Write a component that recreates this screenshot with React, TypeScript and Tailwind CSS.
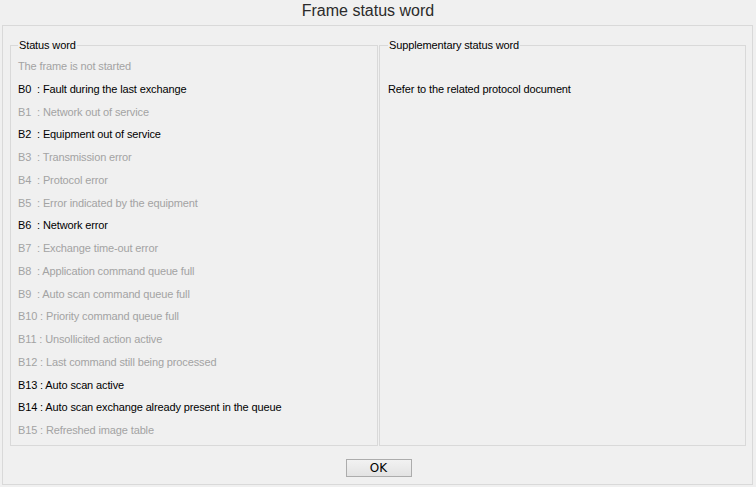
import React from 'react';

interface StatusRow {
  label: string;
  text: string;
  active: boolean;
}

const rows: StatusRow[] = [
  { label: '', text: 'The frame is not started', active: false },
  { label: 'B0  : ', text: 'Fault during the last exchange', active: true },
  { label: 'B1  : ', text: 'Network out of service', active: false },
  { label: 'B2  : ', text: 'Equipment out of service', active: true },
  { label: 'B3  : ', text: 'Transmission error', active: false },
  { label: 'B4  : ', text: 'Protocol error', active: false },
  { label: 'B5  : ', text: 'Error indicated by the equipment', active: false },
  { label: 'B6  : ', text: 'Network error', active: true },
  { label: 'B7  : ', text: 'Exchange time-out error', active: false },
  { label: 'B8  : ', text: 'Application command queue full', active: false },
  { label: 'B9  : ', text: 'Auto scan command queue full', active: false },
  { label: 'B10 : ', text: 'Priority command queue full', active: false },
  { label: 'B11 : ', text: 'Unsollicited action active', active: false },
  { label: 'B12 : ', text: 'Last command still being processed', active: false },
  { label: 'B13 : ', text: 'Auto scan active', active: true },
  { label: 'B14 : ', text: 'Auto scan exchange already present in the queue', active: true },
  { label: 'B15 : ', text: 'Refreshed image table', active: false },
];

export default function App() {
  return (
    <div className="w-[756px] h-[487px] bg-[#f0f0f0] overflow-hidden font-['Liberation_Sans',Arial,sans-serif] text-[11px] tracking-[-0.13px]">
      {/* title bar */}
      <div className="h-[22px] flex items-center justify-center pr-[20px] text-[16px] tracking-normal text-[#2b2b2b]">
        Frame status word
      </div>

      <div className="ml-[2px] mt-[3px] w-[751px] h-[460px] border border-[#d9d9d9] pt-[12px] pl-[7px] flex flex-col">
        <div className="flex gap-[1px] h-[408px]">
          <fieldset className="w-[368px] border border-[#d9d9d9] pl-[7px]">
            <legend className="px-[1px] leading-[14px] text-black">Status word</legend>
            <div className="pt-[3px]">
              {rows.map((r, i) => (
                <div
                  key={i}
                  className={`h-[22.75px] leading-[22.75px] whitespace-pre ${r.active ? 'text-black' : 'text-[#a3a3a3]'}`}
                >
                  {r.label}
                  {r.text}
                </div>
              ))}
            </div>
          </fieldset>

          <fieldset className="w-[367px] border border-[#d9d9d9] pl-[8px]">
            <legend className="px-[1px] leading-[14px] text-black">Supplementary status word</legend>
            <div className="pt-[3px]">
              <div className="h-[22.75px]" />
              <div className="h-[22.75px] leading-[22.75px] text-black">Refer to the related protocol document</div>
            </div>
          </fieldset>
        </div>

        <div className="flex justify-center pr-[5px] mt-[13px]">
          <button className="w-[66px] h-[18px] border border-[#acacac] bg-gradient-to-b from-[#f2f2f2] to-[#e3e3e3] text-[12px] leading-[16px] tracking-normal text-black font-['DejaVu_Sans',sans-serif]">
            OK
          </button>
        </div>
      </div>
    </div>
  );
}
